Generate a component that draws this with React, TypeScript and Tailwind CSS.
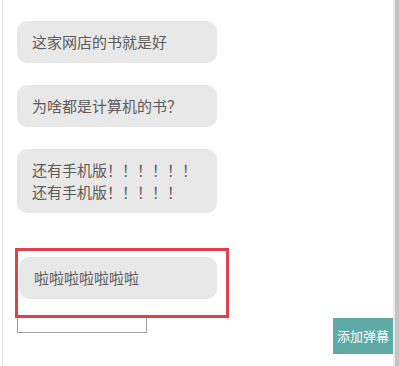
import React from 'react';

const font = { fontFamily: '"Noto Sans CJK SC", "Noto Sans", sans-serif' };

const Bubble = ({ children, className = '' }: { children: React.ReactNode; className?: string }) => (
  <div className={`rounded-[10px] bg-[#e8e8e8] px-[15px] py-[10px] text-[15px] leading-[22px] text-[#5c5c5c] ${className}`}>
    {children}
  </div>
);

export default function App() {
  return (
    <div className="flex h-[366px] w-[399px] bg-white" style={font}>
      <div className="w-[2px]" />
      <div className="w-px bg-[#e3e3e3]" />

      {/* danmu list */}
      <div className="flex flex-1 flex-col pt-[21px]">
        <Bubble className="ml-[14px] mb-[22px] w-[200px]">这家网店的书就是好</Bubble>
        <Bubble className="ml-[14px] mb-[22px] w-[200px]">为啥都是计算机的书？</Bubble>
        <Bubble className="ml-[14px] w-[200px]">
          还有手机版！！！！！！
          <br />
          还有手机版！！！！！
        </Bubble>

        <div className="relative z-10 ml-[15px] mt-[38px] w-[208px] pb-[16px] pt-[6px] outline-3 outline-[#e0404c]">
          <Bubble className="ml-px w-[198px]">啦啦啦啦啦啦啦</Bubble>
        </div>

        <div className="flex items-start justify-between">
          <input className="ml-[14px] h-[18px] w-[130px] border border-[#a0a0a0] bg-white outline-none" />
          <button className="mt-[3px] h-[36px] w-[60px] bg-[#5fa9a6] text-[13px] text-white">添加弹幕</button>
        </div>
      </div>

      <div className="w-[2px] bg-[#e8e8e8]" />
      <div className="w-[4px] bg-[#c4c4c4]" />
    </div>
  );
}
